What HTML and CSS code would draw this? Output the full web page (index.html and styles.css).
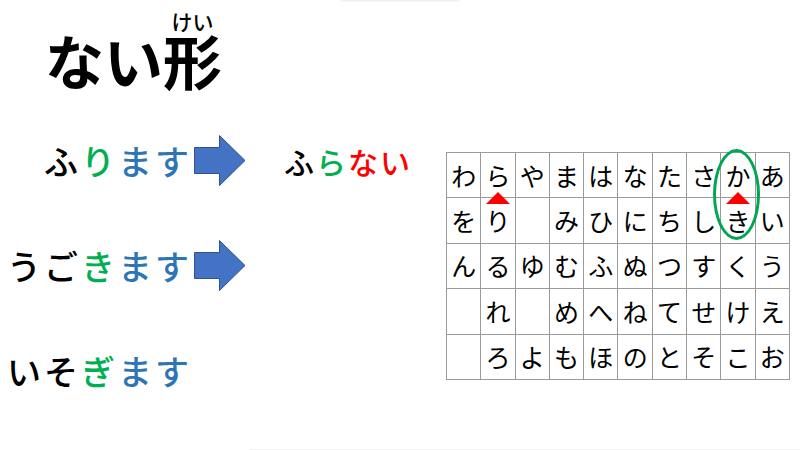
FILE: index.html
```html
<!DOCTYPE html>
<html lang="ja">
<head>
<meta charset="utf-8">
<link rel="stylesheet" href="styles.css">
</head>
<body>
<div class="slide">
  <div class="topline"></div>
  <header class="header">
    <h1 class="title">ない<span class="ruby">形<span class="rt">けい</span></span></h1>
  </header>
  <main class="main">
    <section class="words">
      <div class="row">
        <div class="word"><span class="k">ふ</span><span class="g">り</span><span class="b">ます</span></div>
        <div class="arrow-cell"><svg class="arrow" viewBox="0 0 52 51" width="52" height="51"><path d="M0.5 12.5 H25.5 V0.5 L51 25.5 L25.5 50.5 V38.5 H0.5 Z" fill="#4472c4" stroke="#2f528f" stroke-width="1"/></svg></div>
        <div class="result"><span class="k">ふ</span><span class="g">ら</span><span class="r">ない</span></div>
      </div>
      <div class="row">
        <div class="word"><span class="k">うご</span><span class="g">き</span><span class="b">ます</span></div>
        <div class="arrow-cell"><svg class="arrow" viewBox="0 0 52 51" width="52" height="51"><path d="M0.5 12.5 H25.5 V0.5 L51 25.5 L25.5 50.5 V38.5 H0.5 Z" fill="#4472c4" stroke="#2f528f" stroke-width="1"/></svg></div>
        <div class="result"></div>
      </div>
      <div class="row">
        <div class="word"><span class="k">いそ</span><span class="g">ぎ</span><span class="b">ます</span></div>
        <div class="arrow-cell"></div>
        <div class="result"></div>
      </div>
    </section>
    <section class="table-wrap">
      <div class="kana">
        <div class="c">わ</div><div class="c mark">ら<span class="tri"></span></div><div class="c">や</div><div class="c">ま</div><div class="c">は</div><div class="c">な</div><div class="c">た</div><div class="c">さ</div><div class="c mark">か<span class="tri"></span></div><div class="c">あ</div>
        <div class="c">を</div><div class="c">り</div><div class="c"></div><div class="c">み</div><div class="c">ひ</div><div class="c">に</div><div class="c">ち</div><div class="c">し</div><div class="c">き</div><div class="c">い</div>
        <div class="c">ん</div><div class="c">る</div><div class="c">ゆ</div><div class="c">む</div><div class="c">ふ</div><div class="c">ぬ</div><div class="c">つ</div><div class="c">す</div><div class="c">く</div><div class="c">う</div>
        <div class="c"></div><div class="c">れ</div><div class="c"></div><div class="c">め</div><div class="c">へ</div><div class="c">ね</div><div class="c">て</div><div class="c">せ</div><div class="c">け</div><div class="c">え</div>
        <div class="c"></div><div class="c">ろ</div><div class="c">よ</div><div class="c">も</div><div class="c">ほ</div><div class="c">の</div><div class="c">と</div><div class="c">そ</div><div class="c">こ</div><div class="c">お</div>
      </div>
      <div class="ellipse"></div>
    </section>
  </main>
  <div class="bottomline"></div>
</div>
</body>
</html>
```
FILE: styles.css
```css
html, body {
  margin: 0;
  padding: 0;
  background: #ffffff;
}
body {
  font-family: "Noto Sans CJK JP", "Noto Sans", sans-serif;
  color: #000;
}
.slide {
  width: 800px;
  height: 450px;
  position: relative;
  overflow: hidden;
  display: flex;
  flex-direction: column;
}
.topline {
  height: 2px;
  margin-left: 340px;
  width: 120px;
  background: linear-gradient(#eeeeee, #fafafa);
  flex: none;
}
.header {
  height: 106px;
  flex: none;
}
.title {
  margin: 0;
  padding: 28px 0 0 45px;
  font-size: 59px;
  font-weight: 700;
  line-height: 1;
  letter-spacing: 0;
}
.ruby {
  position: relative;
  display: inline-block;
}
.rt {
  position: absolute;
  left: -4px;
  right: -4px;
  top: -19px;
  text-align: center;
  font-size: 21px;
  font-weight: 500;
  line-height: 1;
  letter-spacing: 0;
  white-space: nowrap;
}
.main {
  display: flex;
  flex: none;
  height: 340px;
}
.words {
  width: 446px;
  flex: none;
  display: flex;
  flex-direction: column;
}
.row {
  height: 105px;
  display: grid;
  grid-template-columns: 188px 58px 1fr;
  align-items: center;
}
.word, .result {
  font-weight: 500;
  line-height: 1;
  white-space: nowrap;
}
.word {
  font-size: 34px;
  letter-spacing: 3px;
  justify-self: end;
  margin-right: -4px;
}
.result {
  font-size: 30px;
  letter-spacing: 2px;
  padding-left: 38px;
}
.arrow-cell {
  padding-left: 6px;
  height: 51px;
}
.arrow {
  display: block;
}
.k { color: #000000; }
.g { color: #00b050; }
.b { color: #2e75b6; }
.r { color: #ff0000; }
.table-wrap {
  position: relative;
  margin-top: 44px;
  align-self: flex-start;
}
.kana {
  display: grid;
  grid-template-columns: repeat(10, 33.3px);
  grid-template-rows: repeat(5, 44.4px);
  gap: 1px;
  padding: 1px;
  background: #9a9a9a;
}
.c {
  background: #ffffff;
  display: flex;
  align-items: center;
  justify-content: center;
  font-size: 25px;
  font-weight: 400;
  line-height: 1;
  position: relative;
}
.tri {
  position: absolute;
  left: 50%;
  bottom: -7px;
  margin-left: -12px;
  width: 0;
  height: 0;
  border-left: 12px solid transparent;
  border-right: 12px solid transparent;
  border-bottom: 12px solid #ff0000;
  z-index: 2;
}
.ellipse {
  position: absolute;
  left: 267px;
  top: -3px;
  width: 41px;
  height: 85px;
  border: 3px solid #00a651;
  border-radius: 50%;
  z-index: 3;
}
.bottomline {
  margin-top: auto;
  margin-left: 250px;
  height: 1px;
  background: #f2f2f2;
}
```
